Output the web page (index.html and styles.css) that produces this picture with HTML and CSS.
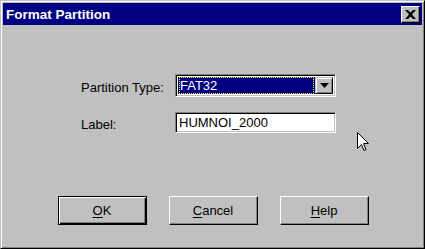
FILE: index.html
```html
<!DOCTYPE html>
<html>
<head>
<meta charset="utf-8">
<link rel="stylesheet" href="styles.css">
</head>
<body>
<div class="window">
  <div class="titlebar">
    <span class="title">Format Partition</span>
    <span class="close"><svg width="11" height="9" viewBox="0 0 11 9"><path d="M0 0h3l2.5 2.5L8 0h3L7 4.5 11 9H8L5.5 6.5 3 9H0l4-4.5z" fill="#000"/></svg></span>
  </div>
  <div class="body">
    <div class="form">
      <div class="label">Partition Type:</div>
      <div class="combo">
        <div class="combo-value"><span class="focus">FAT32</span></div>
        <div class="combo-btn"><svg width="9" height="5" viewBox="0 0 9 5"><path d="M0 0h9L4.5 5z" fill="#000"/></svg></div>
      </div>
      <div class="label">Label:</div>
      <div class="field">HUMNOI_2000</div>
    </div>
    <div class="buttons">
      <div class="btn default"><span class="btn-inner"><u>O</u>K</span></div>
      <div class="btn"><span class="btn-inner"><u>C</u>ancel</span></div>
      <div class="btn"><span class="btn-inner"><u>H</u>elp</span></div>
    </div>
  </div>
  <svg class="cursor" width="12" height="19" viewBox="0 0 12 19"><path d="M0.5 0.5V16.5L4.5 12.5L7 18.5L9 17.5L6.5 11.5H11.5Z" fill="#fff" stroke="#000" stroke-width="1"/></svg>
</div>
</body>
</html>
```
FILE: styles.css
```css
html, body {
  margin: 0;
  padding: 0;
  background: #c0c0c0;
}
.window {
  position: relative;
  width: 425px;
  height: 249px;
  box-sizing: border-box;
  background: #c0c0c0;
  border-top: 1px solid #c0c0c0;
  border-left: 1px solid #c0c0c0;
  border-right: 1px solid #000;
  border-bottom: 1px solid #000;
  box-shadow: inset 1px 1px 0 #fff, inset -1px -1px 0 #808080;
  padding: 2px;
  display: flex;
  flex-direction: column;
  font-family: "Liberation Sans", Arial, sans-serif;
  font-size: 13px;
  color: #000;
}
.titlebar {
  height: 22px;
  background: #000080;
  display: flex;
  align-items: center;
  justify-content: space-between;
  padding: 0 2px 0 3px;
}
.title {
  color: #fff;
  font-weight: bold;
  font-size: 13.5px;
}
.close {
  width: 19px;
  height: 17px;
  box-sizing: border-box;
  background: #c0c0c0;
  border-top: 1px solid #fff;
  border-left: 1px solid #fff;
  border-right: 1px solid #000;
  border-bottom: 1px solid #000;
  box-shadow: inset -1px -1px 0 #808080;
  display: flex;
  align-items: center;
  justify-content: center;
}
.body {
  flex: 1;
  display: flex;
  flex-direction: column;
}
.form {
  margin-top: 49px;
  margin-left: 78px;
  display: grid;
  grid-template-columns: 94px 161px;
  row-gap: 15px;
  align-items: center;
}
.label {
  padding-top: 3px;
}
.combo {
  height: 23px;
  box-sizing: border-box;
  background: #fff;
  border-top: 1px solid #808080;
  border-left: 1px solid #808080;
  border-right: 1px solid #fff;
  border-bottom: 1px solid #fff;
  box-shadow: inset 1px 1px 0 #000, inset -1px -1px 0 #c0c0c0;
  display: flex;
  padding: 2px;
}
.combo-value {
  flex: 1;
  background: #000080;
  color: #fff;
  display: flex;
  align-items: center;
  padding: 0 1px;
}
.focus {
  display: flex;
  align-items: center;
  height: 100%;
  width: 100%;
  box-sizing: border-box;
  padding-left: 1px;
  outline: 1px dotted #ffff00;
  outline-offset: -1px;
}
.combo-btn {
  width: 18px;
  box-sizing: border-box;
  background: #c0c0c0;
  border-top: 1px solid #c0c0c0;
  border-left: 1px solid #c0c0c0;
  border-right: 1px solid #000;
  border-bottom: 1px solid #000;
  box-shadow: inset 1px 1px 0 #fff, inset -1px -1px 0 #808080;
  display: flex;
  align-items: center;
  justify-content: center;
}
.field {
  height: 21px;
  box-sizing: border-box;
  background: #fff;
  border-top: 1px solid #808080;
  border-left: 1px solid #808080;
  border-right: 1px solid #fff;
  border-bottom: 1px solid #fff;
  box-shadow: inset 1px 1px 0 #000, inset -1px -1px 0 #c0c0c0;
  padding: 0 3px;
  display: flex;
  align-items: center;
}
.buttons {
  margin-top: auto;
  margin-bottom: 21px;
  display: flex;
  justify-content: center;
  gap: 22px;
  padding-left: 1px;
}
.btn {
  width: 89px;
  height: 29px;
  box-sizing: border-box;
  background: #c0c0c0;
  border-top: 1px solid #fff;
  border-left: 1px solid #fff;
  border-right: 1px solid #000;
  border-bottom: 1px solid #000;
  box-shadow: inset -1px -1px 0 #808080;
  display: flex;
  align-items: center;
  justify-content: center;
}
.btn.default {
  border: 1px solid #000;
  box-shadow: inset 1px 1px 0 #fff, inset -1px -1px 0 #000, inset -2px -2px 0 #808080;
}
.btn u {
  text-decoration-thickness: 1px;
  text-underline-offset: 2px;
}
.cursor {
  position: absolute;
  left: 356px;
  top: 131px;
}
```
